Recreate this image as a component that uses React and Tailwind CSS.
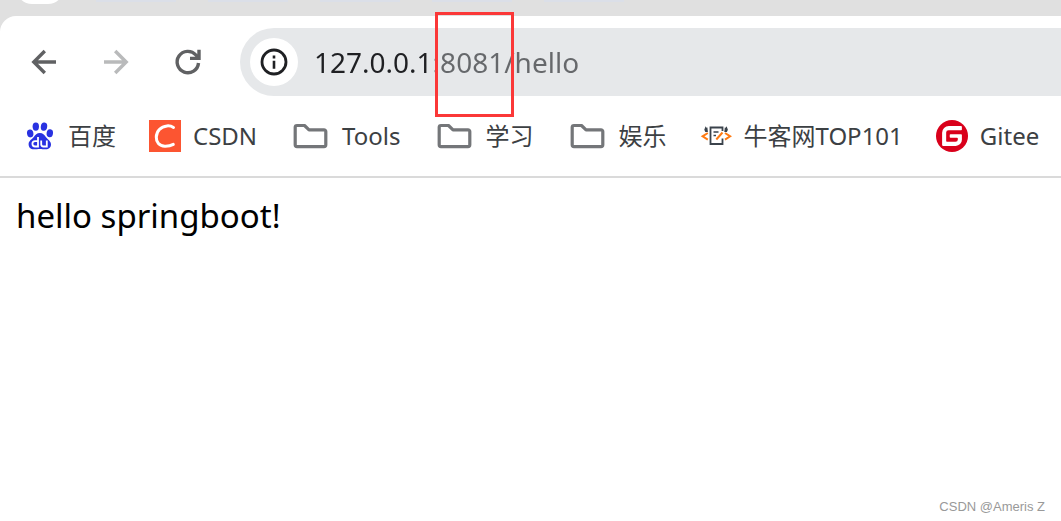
import React from "react";

function BaiduIcon() {
  return (
    <svg viewBox="0 0 32 32" className="size-8" aria-hidden="true">
      <g fill="#2932e1">
        <ellipse cx="6.2" cy="13.400" rx="3.2" ry="4" transform="rotate(-8 6.2 13.4)" />
        <ellipse cx="11.8" cy="6.600" rx="3.2" ry="4.2" />
        <ellipse cx="20" cy="6.600" rx="3.2" ry="4.2" transform="rotate(8 20 6.6)" />
        <ellipse cx="25.800" cy="13.200" rx="3.2" ry="4" transform="rotate(8 25.8 13.2)" />
        <path d="M15.8 13c3 0 4.600 2 6.200 4.200 2 2.400 5 4 5 7.200 0 3-2.200 4.800-5.200 4.800-2.400 0-4-.3-6-.3s-3.600.3-6 .3c-3.200 0-5.200-2-5.200-5 0-3.400 3-4.600 5-7 1.800-2.200 3.200-4.200 6.200-4.200z" />
      </g>
      <g fill="none" stroke="#fff" strokeWidth="1.8">
        <path d="M14 17v9.500h-3c-1.600 0-2.600-1-2.600-2.700s1-2.700 2.600-2.700h3" />
        <path d="M17.200 20.500v3.800c0 1.500.8 2.200 2.200 2.200h3.400v-6" />
      </g>
    </svg>
  );
}

function CsdnIcon() {
  return (
    <svg viewBox="0 0 32 32" className="size-8" aria-hidden="true">
      <path fill="#fc5531" d="M0 0h32v32H0z" />
      <path
        d="M24.500 7.400c-1.900-1.200-4.100-1.700-6.500-1.500C11.700 6.400 7.500 11.200 7.300 17c-.2 5.400 3 9.100 8.500 9.300 3.200.1 6-.5 8.500-1.900"
        fill="none"
        stroke="#fff"
        strokeWidth="3"
        strokeLinecap="round"
      />
    </svg>
  );
}

function FolderIcon() {
  return (
    <svg viewBox="0 0 40 32" className="h-8 w-10" aria-hidden="true">
      <path
        d="M7 5.500h7.500l4.500 4.300h15a1.800 1.800 0 0 1 1.800 1.800v13.200a1.800 1.800 0 0 1-1.800 1.800H7a1.800 1.800 0 0 1-1.800-1.800V7.300A1.800 1.800 0 0 1 7 5.500z"
        fill="none"
        stroke="#747679"
        strokeWidth="3.200"
        strokeLinejoin="round"
      />
    </svg>
  );
}

function NowcoderIcon() {
  return (
    <svg viewBox="0 0 32 32" className="size-8" aria-hidden="true">
      <g fill="none" stroke="#3b434c" strokeWidth="1.800">
        <path d="M22.500 18.500V24H10.500V7.500h12V11" />
        <path d="M13.500 12h5M13.500 15.500h2.500" strokeWidth="1.500" />
      </g>
      <g fill="#3b434c">
        <path d="M5.600 6.200l.9 1.600.9-.3.5 4.500H5.300l-1-2.200z" />
        <path d="M26.600 6.200l-.9 1.600-.9-.3-.5 4.500h2.600l1-2.200z" />
      </g>
      <path
        d="M7.800 13L2.600 16.300l5.200 3.300M25 13l5.200 3.300-5.200 3.300M22.500 12.500L16.300 19.500"
        fill="none"
        stroke="#ff7a12"
        strokeWidth="2"
      />
    </svg>
  );
}

function GiteeIcon() {
  return (
    <svg viewBox="0 0 32 32" className="size-8" aria-hidden="true">
      <circle cx="16" cy="16" r="16" fill="#d9001b" />
      <path
        fill="#fff"
        d="M25.100 6.110h-12.260a6.730 6.730 0 0 0-6.730 6.730v12.260c0 .44.350.790.790.790h12.860a6.150 6.150 0 0 0 6.140-6.140v-4.740a.79.79 0 0 0-.79-.79h-10.590a.79.79 0 0 0-.79.79v1.980c0 .44.350.790.790.790h6.530c.44 0 .79.350.790.790v.900a2.370 2.370 0 0 1-2.370 2.370h-8.510a.79.79 0 0 1-.79-.79v-8.510a2.370 2.370 0 0 1 2.370-2.370h12.560a.79.79 0 0 0 .79-.79V6.900a.79.79 0 0 0-.79-.79z"
      />
    </svg>
  );
}

const bookmarks = [
  { label: "百度", Icon: BaiduIcon },
  { label: "CSDN", Icon: CsdnIcon },
  { label: "Tools", Icon: FolderIcon },
  { label: "学习", Icon: FolderIcon },
  { label: "娱乐", Icon: FolderIcon },
  { label: "牛客网TOP101", Icon: NowcoderIcon },
  { label: "Gitee", Icon: GiteeIcon },
];

function TabStrip() {
  return (
    <div className="flex h-8 items-start gap-8 overflow-hidden bg-[#e0e0e0] pl-4">
      <div className="-mt-4 h-5 w-12 shrink-0 rounded-b-2xl bg-white" />
      <div className="h-0.5 w-20 shrink-0 bg-[#dbdfe8]" />
      <div className="h-0.5 w-20 shrink-0 bg-[#dbdfe8]" />
      <div className="h-0.5 w-20 shrink-0 bg-[#dbdfe8]" />
      <div className="h-0.5 w-20 shrink-0 bg-[#dbdfe8]" />
      <div className="h-0.5 w-20 shrink-0 bg-[#dbdfe8]" />
    </div>
  );
}

function AddressBar() {
  return (
    <div className="relative ml-4 flex h-[68px] min-w-0 grow items-center gap-4 rounded-l-full bg-[#e6e8ea] pl-[10px]">
      <button
        type="button"
        aria-label="Site information"
        className="flex size-12 shrink-0 items-center justify-center rounded-full bg-white"
      >
        <svg viewBox="0 0 28 28" className="size-7" aria-hidden="true">
          <circle cx="14" cy="14" r="12" fill="none" stroke="#1f2023" strokeWidth="2.800" />
          <path d="M12.700 12.800h2.600v8h-2.600zM12.700 7.600h2.600v2.800h-2.600z" fill="#1f2023" />
        </svg>
      </button>
      <input
        type="text"
        aria-label="Address"
        defaultValue="127.0.0.1:8081/hello"
        className="min-w-0 grow bg-linear-to-r from-[#1f2023] from-[119px] to-[#66686b] to-[119px] bg-clip-text text-[28px] leading-10 text-transparent caret-black outline-none"
      />
      <div className="pointer-events-none absolute -top-4 left-[195px] h-[105px] w-[79px] border-3 border-[#fb3838]" />
    </div>
  );
}

export default function App() {
  return (
    <div className="flex min-h-screen flex-col bg-white font-['Noto_Sans','Noto_Sans_CJK_SC',sans-serif]">
      <TabStrip />
      <header className="-mt-4 rounded-tl-2xl border-b-2 border-[#dadada] bg-white">
        <div className="flex items-center pt-3 pl-2">
          <nav className="flex" aria-label="History">
            <button type="button" aria-label="Back" className="flex h-16 w-[72px] items-center justify-center">
              <svg viewBox="0 0 28 28" className="size-7" aria-hidden="true">
                <path d="M26 14H4M14.800 3L3.800 14l11 11" fill="none" stroke="#606163" strokeWidth="3.400" />
              </svg>
            </button>
            <button type="button" aria-label="Forward" className="flex h-16 w-[72px] items-center justify-center">
              <svg viewBox="0 0 28 28" className="size-7" aria-hidden="true">
                <path d="M2 14h22M13.200 3l11 11-11 11" fill="none" stroke="#b9babb" strokeWidth="3.400" />
              </svg>
            </button>
            <button type="button" aria-label="Reload" className="flex h-16 w-[72px] items-center justify-center">
              <svg viewBox="0 0 28 28" className="size-7" aria-hidden="true">
                <path d="M24.500 15a10.700 10.700 0 1 1-2.600-8l3 3" fill="none" stroke="#606163" strokeWidth="3.400" />
                <path d="M25 1.800v8.600h-9" fill="none" stroke="#606163" strokeWidth="3.400" />
              </svg>
            </button>
          </nav>
          <AddressBar />
        </div>
        <nav className="flex h-20 items-center gap-[33px] overflow-hidden pl-6" aria-label="Bookmarks">
          {bookmarks.map(({ label, Icon }) => (
            <a
              key={label}
              href="#"
              className="flex shrink-0 items-center gap-3 text-2xl whitespace-nowrap text-[#3c4043]"
            >
              <Icon />
              {label}
            </a>
          ))}
        </nav>
      </header>
      <main className="grow px-4 py-4 text-[33px] leading-[44px] text-black">hello springboot!</main>
      <footer className="px-4 pb-1 text-right font-['Liberation_Sans',sans-serif] text-[13px] leading-5 text-[#999999]">
        CSDN @Ameris Z
      </footer>
    </div>
  );
}
